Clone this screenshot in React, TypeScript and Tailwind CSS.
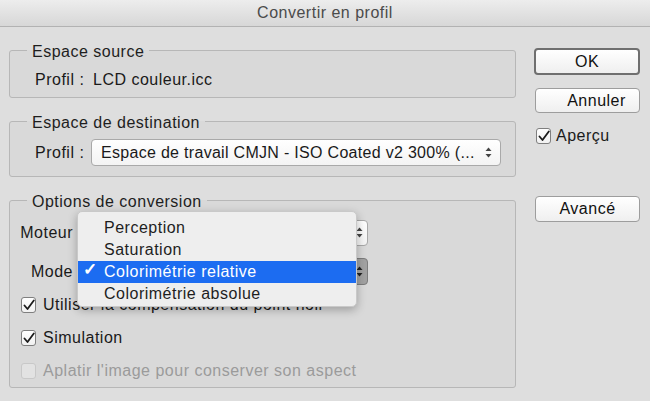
import React from 'react'

// === small pieces ===
function Arrows({ dark = false }: { dark?: boolean }) {
  const c = dark ? '#222' : '#444'
  return (
    <svg width="7" height="11" viewBox="0 0 7 11" className="shrink-0">
      <path d="M3.5 0.5 L6.5 4 L0.5 4 Z" fill={c} />
      <path d="M3.5 10.5 L6.5 7 L0.5 7 Z" fill={c} />
    </svg>
  )
}

function CheckBox({ checked, disabled }: { checked?: boolean; disabled?: boolean }) {
  return (
    <span
      className={
        disabled
          ? 'w-[15px] h-[16px] rounded-[3px] border border-[#c8c8c8] bg-[#e2e2e2] shrink-0'
          : 'w-[15px] h-[16px] rounded-[3px] border border-[#7f7f7f] bg-gradient-to-b from-white to-[#f1f1f1] shrink-0 flex items-center justify-center'
      }
    >
      {checked && (
        <svg width="12" height="12" viewBox="0 0 12 12">
          <path d="M1.5 6.5 L4.5 10 L10.8 1.5" fill="none" stroke="#1c1c1c" strokeWidth="1.8" strokeLinecap="round" strokeLinejoin="round" />
        </svg>
      )}
    </span>
  )
}

function Group({ title, children, className }: { title: string; children: React.ReactNode; className?: string }) {
  return (
    <fieldset className={'border border-[#b7b7b7] rounded-[3px] bg-[#d9d9d9] ' + (className ?? '')}>
      <legend className="ml-[17px] px-[5px] leading-[18px] text-[#1e1e1e]">
        <span className="relative top-[2px]">{title}</span>
      </legend>
      {children}
    </fieldset>
  )
}

function Button({ children, primary, className }: { children: React.ReactNode; primary?: boolean; className?: string }) {
  return (
    <div
      className={
        (primary
          ? 'border-2 border-[#6f6f6f] '
          : 'border border-[#9d9d9d] ') +
        'rounded-[4px] bg-gradient-to-b from-white to-[#efefef] flex items-center justify-center text-[#111] ' +
        (className ?? '')
      }
    >
      {children}
    </div>
  )
}

// === Dialog ===
export default function App() {
  const items = ['Perception', 'Saturation', 'Colorimétrie relative', 'Colorimétrie absolue']

  return (
    <div className="w-[650px] h-[401px] overflow-hidden bg-[#dedede] font-['Liberation_Sans',Arial,sans-serif] text-[16px] tracking-[0.5px] text-[#1a1a1a]">
      {/* title bar */}
      <div className="h-[27px] border-b border-[#b2b2b2] bg-gradient-to-b from-[#ededed] to-[#d7d7d7] flex items-center justify-center text-[#4b4b4b]">
        Convertir en profil
      </div>

      <div className="flex pl-[9px] pt-[14px]">
        {/* left column */}
        <div className="w-[507px] flex flex-col gap-[14px]">
          <Group title="Espace source" className="pt-[12px] pb-[8px]">
            <div className="flex leading-[18px] pl-[25px]">
              <span className="w-[58px]">Profil :</span>
              <span>LCD couleur.icc</span>
            </div>
          </Group>

          <Group title="Espace de destination" className="pt-[9px] pb-[10px]">
            <div className="flex items-center pl-[25px]">
              <span className="w-[56px]">Profil :</span>
              <div className="w-[410px] h-[27px] rounded-[4px] border border-[#a9a9a9] bg-gradient-to-b from-white to-[#f3f3f3] flex items-center pl-[9px] pr-[8px]">
                <span className="flex-1 whitespace-nowrap overflow-hidden tracking-[0.3px]">Espace de travail CMJN - ISO Coated v2 300% (...</span>
                <Arrows />
              </div>
            </div>
          </Group>

          <Group title="Options de conversion" className="pt-[10px] pb-[5px]">
            <div className="relative flex flex-col gap-[12px]">
              <div className="flex items-center h-[27px]">
                <span className="w-[63px] text-right">Moteur</span>
                <div className="ml-[7px] w-[288px] h-[26px] rounded-[4px] border border-[#a9a9a9] bg-gradient-to-b from-white to-[#f3f3f3] flex items-center justify-end pr-[4px]">
                  <Arrows />
                </div>
              </div>
              <div className="flex items-center h-[27px]">
                <span className="w-[63px] text-right">Mode</span>
                <div className="ml-[7px] w-[288px] h-[27px] rounded-[4px] border border-[#7d7d7d] bg-[#a2a2a2] flex items-center justify-end pr-[4px]">
                  <Arrows dark />
                </div>
              </div>

              {/* open popup menu */}
              <div className="absolute left-[67px] top-[-8px] w-[280px] h-[96px] rounded-[5px] bg-[#eeeeee] border border-[#c9c9c9] shadow-[0_3px_10px_rgba(0,0,0,0.28)] pt-[5px] z-10">
                {items.map((it, i) => (
                  <div
                    key={it}
                    className={
                      'relative h-[22px] flex items-center pl-[26px] leading-[18px] ' +
                      (i === 2 ? 'bg-[#1c6cf1] text-white' : 'text-[#1e1e1e]')
                    }
                  >
                    {i === 2 && <span className="absolute left-[5px] top-[0px] text-[17px] font-bold">✓</span>}
                    {it}
                  </div>
                ))}
              </div>
            </div>

            <div className="mt-[9px] flex flex-col gap-[11px] pl-[11px]">
              <div className="flex items-center h-[22px] gap-[7px]">
                <CheckBox checked />
                <span>Utiliser la compensation du point noir</span>
              </div>
              <div className="flex items-center h-[22px] gap-[7px]">
                <CheckBox checked />
                <span>Simulation</span>
              </div>
              <div className="flex items-center h-[22px] gap-[7px] text-[#9b9b9b]">
                <CheckBox disabled />
                <span>Aplatir l'image pour conserver son aspect</span>
              </div>
            </div>
          </Group>
        </div>

        {/* right column */}
        <div className="ml-[18px] w-[106px] flex flex-col">
          <Button primary className="mt-[7px] h-[27px] w-[106px]">OK</Button>
          <Button className="mt-[13px] h-[25px] w-[105px] ml-[1px] pl-[18px]">Annuler</Button>
          <div className="mt-[14px] ml-[2px] flex items-center h-[17px] gap-[5px]">
            <CheckBox checked />
            <span>Aperçu</span>
          </div>
          <Button className="mt-[52px] h-[26px] w-[105px] ml-[1px]">Avancé</Button>
        </div>
      </div>
    </div>
  )
}
